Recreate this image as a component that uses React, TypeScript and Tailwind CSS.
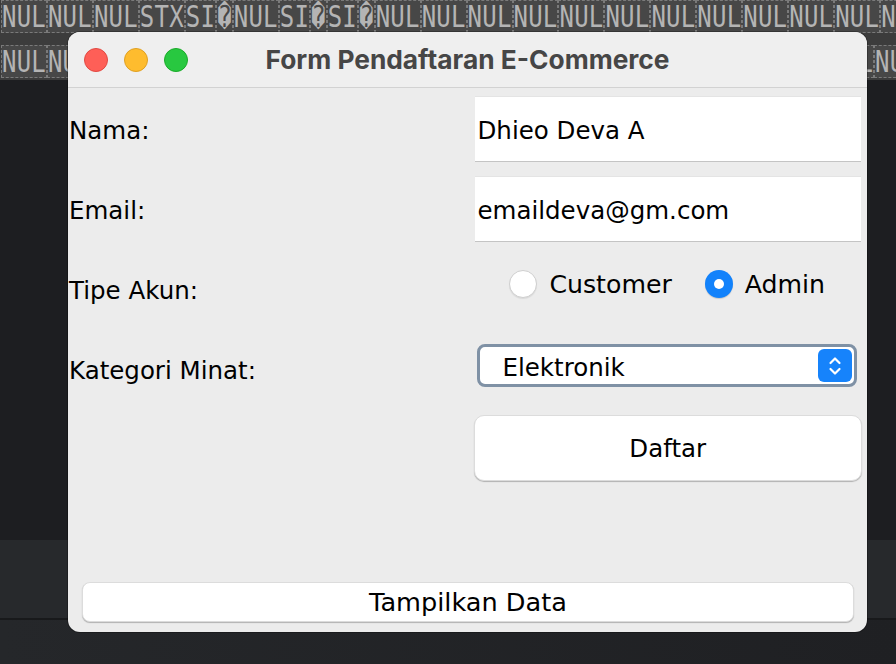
import React from "react";

const row1 = [
  "NUL","NUL","NUL","STX","SI","\uFFFD","NUL","SI","\uFFFD","SI","\uFFFD",
  "NUL","NUL","NUL","NUL","NUL","NUL","NUL","NUL","NUL","NUL","NUL","NUL",
];
const row2 = Array.from({ length: 22 }, () => "NUL");

function Strip({ tokens }: { tokens: string[] }) {
  return (
    <div className="flex h-[33px] items-stretch overflow-hidden whitespace-nowrap pl-[1px]">
      {tokens.map((t, i) => (
        <span
          key={i}
          className="flex shrink-0 items-center border border-dashed border-[#7a7a7a] bg-[#474747] px-0 text-[24px] leading-none tracking-[0.2px] text-[#b4b4b4]"
          style={{ fontFamily: '"DejaVu Sans Mono", "Liberation Mono", monospace' }}
        >
          <span className="inline-block scale-y-125">{t}</span>
        </span>
      ))}
    </div>
  );
}

function Radio({ checked }: { checked?: boolean }) {
  return checked ? (
    <span className="flex h-[28px] w-[28px] items-center justify-center rounded-full bg-[#1282fb] shadow-[0_1px_1px_rgba(0,0,0,0.15)]">
      <span className="h-[10px] w-[10px] rounded-full bg-white" />
    </span>
  ) : (
    <span className="h-[28px] w-[28px] rounded-full border border-[#cfcfcf] bg-white shadow-[0_1px_1px_rgba(0,0,0,0.08)]" />
  );
}

export default function App() {
  const font = { fontFamily: '"DejaVu Sans", "Liberation Sans", sans-serif' };
  return (
    <div className="relative h-[664px] w-[896px] overflow-hidden bg-[#1e1f22]">
      {/* background terminal */}
      <div className="flex h-[80px] flex-col gap-[12px] bg-[#3c3c3c]">
        <Strip tokens={row1} />
        <Strip tokens={row2} />
      </div>
      <div className="h-[460px] bg-[#1d1e21]" />
      <div className="h-[80px] border-b-2 border-[#18191b] bg-[#27292c]" />
      <div className="h-[44px] bg-gradient-to-r from-[#25272a] to-[#1f2023]" />

      {/* window */}
      <div
        className="absolute left-[68px] top-[32px] flex h-[600px] w-[799px] flex-col overflow-hidden rounded-[12px] bg-[#ececec] shadow-[0_0_0_1px_rgba(0,0,0,0.25)]"
        style={font}
      >
        <div className="relative flex h-[56px] shrink-0 items-center justify-center border-b border-[#d2d2d2] bg-[#efefef]">
          <div className="absolute left-[16px] top-[16px] flex gap-[16px]">
            <span className="h-[24px] w-[24px] rounded-full border border-[#e14942] bg-[#fe5f57]" />
            <span className="h-[24px] w-[24px] rounded-full border border-[#dfa023] bg-[#febc2e]" />
            <span className="h-[24px] w-[24px] rounded-full border border-[#1aab29] bg-[#28c840]" />
          </div>
          <span
            className="text-[26.3px] font-bold text-[#464646]"
            style={{ fontFamily: 'Inter, "Noto Sans", sans-serif' }}
          >
            Form Pendaftaran E-Commerce
          </span>
        </div>

        <div className="grid grid-cols-2 pt-[1px] text-[24.5px] text-black">
          {/* Nama */}
          <div className="flex h-[80px] items-center pl-[1px] pt-[5px]">Nama:</div>
          <div className="flex h-[80px] items-start pl-[7px] pr-[6px] pt-[7px]">
            <div className="flex h-[65px] w-full items-center border-t border-[#e4e4e4] bg-white pl-[3px] pt-[4px] shadow-[0_1px_0_#c4c4c4]">
              Dhieo Deva A
            </div>
          </div>
          {/* Email */}
          <div className="flex h-[80px] items-center pl-[1px] pt-[5px]">Email:</div>
          <div className="flex h-[80px] items-start pl-[7px] pr-[6px] pt-[7px]">
            <div className="flex h-[65px] w-full items-center border-t border-[#e4e4e4] bg-white pl-[3px] pt-[4px] shadow-[0_1px_0_#c4c4c4]">
              emaildeva@gm.com
            </div>
          </div>
          {/* Tipe Akun */}
          <div className="flex h-[80px] items-center pl-[1px] pt-[5px]">Tipe Akun:</div>
          <div className="flex h-[80px] items-start justify-center gap-[33px] pt-[16px] text-[25.2px]">
            <div className="flex items-center gap-[12px]">
              <Radio />
              <span className="pt-[1px]">Customer</span>
            </div>
            <div className="flex items-center gap-[12px]">
              <Radio checked />
              <span className="pt-[1px]">Admin</span>
            </div>
          </div>
          {/* Kategori */}
          <div className="flex h-[80px] items-center pl-[1px] pt-[5px]">Kategori Minat:</div>
          <div className="flex h-[80px] items-start pl-[9px] pr-[10px] pt-[15px]">
            <div className="flex h-[43px] w-full items-center justify-between rounded-[8px] border-[3px] border-[#7f91a5] bg-white pl-[23px] pr-[2px]">
              <span className="pt-[5px]">Elektronik</span>
              <span className="flex h-[33px] w-[34px] items-center justify-center rounded-[6px] bg-[#1683fb]">
                <svg width="14" height="22" viewBox="0 0 14 22" fill="none" stroke="white" strokeWidth="2.2" strokeLinecap="round" strokeLinejoin="round">
                  <path d="M2.5 8 L7 3.5 L11.5 8" />
                  <path d="M2.5 14 L7 18.5 L11.5 14" />
                </svg>
              </span>
            </div>
          </div>
          {/* Daftar */}
          <div className="h-[80px]" />
          <div className="flex h-[80px] items-start pl-[6px] pr-[5px] pt-[6px]">
            <div className="flex h-[66px] w-full items-center justify-center rounded-[10px] border border-[#dcdcdc] bg-white pt-[3px] shadow-[0_1px_1px_rgba(0,0,0,0.25)]">
              Daftar
            </div>
          </div>
        </div>

        <div className="mt-auto pb-[10px] pl-[14px] pr-[13px]">
          <div className="flex h-[40px] items-center justify-center rounded-[8px] border border-[#dcdcdc] bg-white pt-[1px] text-[25.6px] text-black shadow-[0_1px_1px_rgba(0,0,0,0.25)]">
            Tampilkan Data
          </div>
        </div>
      </div>
    </div>
  );
}
